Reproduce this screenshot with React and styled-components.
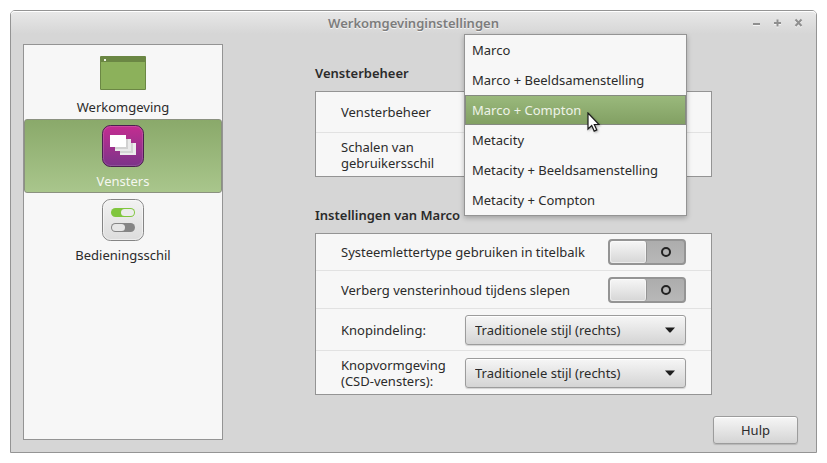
import React, { useState } from "react";
import styled, { createGlobalStyle, css } from "styled-components";

const managers = [
  "Marco",
  "Marco + Beeldsamenstelling",
  "Marco + Compton",
  "Metacity",
  "Metacity + Beeldsamenstelling",
  "Metacity + Compton",
];

const buttonStyles = ["Traditionele stijl (rechts)", "Klassieke stijl (links)"];

export default function App() {
  const [page, setPage] = useState("Vensters");
  const [manager, setManager] = useState("Marco + Compton");

  return (
    <>
      <GlobalStyle />
      <Window>
        <TitleBar>
          <Title>Werkomgevinginstellingen</Title>
          <WindowButtons>
            <WindowButton aria-label="Minimaliseren">
              <svg width="9" height="9" viewBox="0 0 9 9">
                <path d="M1 6h7" />
              </svg>
            </WindowButton>
            <WindowButton aria-label="Maximaliseren">
              <svg width="9" height="9" viewBox="0 0 9 9">
                <path d="M1 5h7M4.5 1.5v7" />
              </svg>
            </WindowButton>
            <WindowButton aria-label="Sluiten">
              <svg width="9" height="9" viewBox="0 0 9 9">
                <path d="M1.5 1.5l6 6.5M7.5 1.5l-6 6.5" />
              </svg>
            </WindowButton>
          </WindowButtons>
        </TitleBar>
        <Body>
          <Sidebar>
            <SidebarItem
              label="Werkomgeving"
              icon={<DesktopIcon />}
              page={page}
              onSelect={setPage}
            />
            <SidebarItem
              label="Vensters"
              icon={<WindowsIcon />}
              page={page}
              onSelect={setPage}
            />
            <SidebarItem
              label="Bedieningsschil"
              icon={<InterfaceIcon />}
              page={page}
              onSelect={setPage}
            />
          </Sidebar>
          <Main>
            <Sections>
              <Section>
                <Heading>Vensterbeheer</Heading>
                <Card>
                  <Row>
                    <Label htmlFor="manager">Vensterbeheer</Label>
                    <MenuAnchor>
                      <Dropdown
                        id="manager"
                        options={managers}
                        value={manager}
                        onChange={(e) => setManager(e.target.value)}
                      />
                      <Menu role="listbox" aria-label="Vensterbeheer">
                        {managers.map((name) => (
                          <Option
                            key={name}
                            role="option"
                            aria-selected={name === manager}
                            $active={name === manager}
                            onClick={() => setManager(name)}
                          >
                            {name}
                          </Option>
                        ))}
                        <Pointer />
                      </Menu>
                    </MenuAnchor>
                  </Row>
                  <Row>
                    <Label htmlFor="scaling">Schalen van gebruikersschil</Label>
                    <Dropdown id="scaling" options={["Automatisch"]} />
                  </Row>
                </Card>
              </Section>
              <Section>
                <Heading>Instellingen van Marco</Heading>
                <Card>
                  <Row>
                    <Label htmlFor="font">
                      Systeemlettertype gebruiken in titelbalk
                    </Label>
                    <Switch id="font" type="checkbox" />
                  </Row>
                  <Row>
                    <Label htmlFor="drag">
                      Verberg vensterinhoud tijdens slepen
                    </Label>
                    <Switch id="drag" type="checkbox" />
                  </Row>
                  <Row>
                    <Label htmlFor="layout">Knopindeling:</Label>
                    <Dropdown id="layout" options={buttonStyles} />
                  </Row>
                  <Row>
                    <Label htmlFor="csd">Knopvormgeving (CSD-vensters):</Label>
                    <Dropdown id="csd" options={buttonStyles} />
                  </Row>
                </Card>
              </Section>
            </Sections>
            <Footer>
              <HelpButton>Hulp</HelpButton>
            </Footer>
          </Main>
        </Body>
      </Window>
    </>
  );
}

function SidebarItem({ label, icon, page, onSelect }) {
  return (
    <Item $active={page === label} onClick={() => onSelect(label)}>
      <IconBox>{icon}</IconBox>
      {label}
    </Item>
  );
}

function Dropdown({ options, ...props }) {
  return (
    <SelectBox>
      <Select {...props}>
        {options.map((option) => (
          <option key={option}>{option}</option>
        ))}
      </Select>
      <Arrow width="10" height="6" viewBox="0 0 10 6">
        <path d="M0 0.5h10L6 5Q5 6 4 5z" fill="#1e1e1e" />
      </Arrow>
    </SelectBox>
  );
}

function DesktopIcon() {
  return (
    <svg width="46" height="36" viewBox="0 -2 46 36">
      <rect width="46" height="34" rx="1" fill="#6b8744" />
      <rect x="1" y="6" width="44" height="27" fill="#8cb15b" />
      <rect x="4" y="3" width="2" height="2" fill="#eef3e6" />
    </svg>
  );
}

function WindowsIcon() {
  return (
    <svg width="42" height="42" viewBox="0 0 42 42">
      <defs>
        <linearGradient id="purple" x1="0" y1="0" x2="0" y2="1">
          <stop offset="0" stopColor="#c42d91" />
          <stop offset="1" stopColor="#7b3489" />
        </linearGradient>
      </defs>
      <rect x="0.5" y="0.5" width="41" height="41" rx="8" fill="url(#purple)" stroke="#4b1f4f" />
      <rect x="1.5" y="1.5" width="39" height="39" rx="7" fill="none" stroke="#fff" strokeOpacity="0.14" />
      <rect x="18" y="18" width="16" height="12" fill="#ececec" />
      <path d="M18 18h13v10H18z" fill="#000" fillOpacity="0.1" />
      <rect x="13" y="14" width="16" height="12" fill="#e9e9e9" />
      <path d="M13 14h13v10H13z" fill="#000" fillOpacity="0.1" />
      <rect x="8" y="10" width="16" height="12" fill="#fff" />
    </svg>
  );
}

function InterfaceIcon() {
  return (
    <svg width="42" height="42" viewBox="0 0 42 42">
      <defs>
        <linearGradient id="plate" x1="0" y1="0" x2="0" y2="1">
          <stop offset="0" stopColor="#f2f2f2" />
          <stop offset="1" stopColor="#dcdcdc" />
        </linearGradient>
      </defs>
      <rect x="0.5" y="0.5" width="41" height="41" rx="8" fill="url(#plate)" stroke="#858585" />
      <rect x="1.5" y="1.5" width="39" height="39" rx="7" fill="none" stroke="#fff" strokeOpacity="0.5" />
      <rect x="9" y="9" width="24" height="9" rx="4.5" fill="#80c63e" />
      <rect x="19" y="10" width="13" height="7" rx="3.5" fill="#ececec" />
      <rect x="9" y="24" width="24" height="9" rx="4.5" fill="#858585" />
      <rect x="10" y="25" width="13" height="7" rx="3.5" fill="#e6e6e6" />
    </svg>
  );
}

function Pointer() {
  return (
    <PointerIcon width="13" height="21" viewBox="0 0 13 21">
      <path
        d="M1 1v16l3.7-3.5 2.5 5.6 2.6-1.2-2.5-5.4H12z"
        fill="#fff"
        stroke="#1a1a1a"
        strokeWidth="1.2"
      />
    </PointerIcon>
  );
}

const GlobalStyle = createGlobalStyle`
  *,
  *::before,
  *::after {
    box-sizing: border-box;
  }
  body {
    margin: 0;
    background: #fff;
    color: #2b2b2b;
    font-family: "Noto Sans", sans-serif;
    font-size: 13px;
    line-height: 16px;
  }
  button,
  select {
    font: inherit;
    color: inherit;
  }
`;

const raised = css`
  border: 1px solid #9c9c9c;
  border-radius: 3px;
  background: linear-gradient(#f6f6f6, #d4d4d4);
  box-shadow: inset 0 1px 0 #fff, 0 1px 1px rgba(0, 0, 0, 0.15);
`;

const Window = styled.div`
  display: flex;
  flex-direction: column;
  min-height: calc(100vh - 20px);
  margin: 10px;
  border: 1px solid #949494;
  border-radius: 5px 5px 0 0;
  background: #d6d6d6;
`;

const TitleBar = styled.header`
  display: grid;
  grid-template-columns: 1fr auto 1fr;
  align-items: center;
  height: 23px;
  padding: 0 11px;
  border-radius: 4px 4px 0 0;
  background: linear-gradient(#e8e8e8, #d6d6d6);
  box-shadow: inset 0 1px 0 #fff;
`;

const Title = styled.h1`
  grid-column: 2;
  margin: 0;
  font-size: 13px;
  font-weight: 600;
  color: #7c7c7c;
  text-shadow: 0 1px 0 #f4f4f4;
`;

const WindowButtons = styled.div`
  display: flex;
  justify-content: flex-end;
  gap: 8px;
`;

const WindowButton = styled.button`
  display: grid;
  place-items: center;
  width: 13px;
  height: 16px;
  padding: 0;
  border: 0;
  background: none;

  svg {
    stroke: #8f8f8f;
    stroke-width: 2;
    filter: drop-shadow(0 1px 0 #f4f4f4);
  }
`;

const Body = styled.div`
  display: flex;
  flex: 1;
  padding: 10px 12px 8px;
`;

const Sidebar = styled.nav`
  width: 200px;
  margin-bottom: 4px;
  border: 1px solid #949494;
  background: #f7f7f7;
`;

const Item = styled.button`
  display: flex;
  flex-direction: column;
  align-items: center;
  gap: 3px;
  width: 100%;
  height: 74px;
  padding: 2px 0 3px;
  border: 1px solid transparent;
  border-radius: 3px;
  background: none;
  ${(props) =>
    props.$active &&
    css`
      border-color: #8b9180;
      background: linear-gradient(#8aa96a, #a9c68c);
      color: #f4f7f0;
    `}
`;

const IconBox = styled.span`
  display: grid;
  place-items: center;
  width: 48px;
  height: 48px;
`;

const Main = styled.main`
  display: flex;
  flex: 1;
  flex-direction: column;
`;

const Sections = styled.div`
  display: flex;
  flex: 1;
  flex-direction: column;
  gap: 30px;
  width: 100%;
  max-width: 397px;
  margin: 0 auto;
  padding-top: 21px;
`;

const Section = styled.section``;

const Heading = styled.h2`
  margin: 0 0 10px;
  font-size: 13px;
  font-weight: 600;
`;

const Card = styled.div`
  border: 1px solid #949494;
  background: #f7f7f7;
`;

const Row = styled.div`
  display: flex;
  align-items: center;
  gap: 12px;
  padding: 5px 25px;

  & + & {
    padding-top: 6px;
    border-top: 1px solid #e2e2e2;
  }
`;

const Label = styled.label`
  flex: 1;
`;

const MenuAnchor = styled.div`
  position: relative;
`;

const SelectBox = styled.div`
  display: grid;
  align-items: center;
  width: 221px;

  > * {
    grid-area: 1 / 1;
  }
`;

const Select = styled.select`
  ${raised}
  appearance: none;
  height: 30px;
  padding: 0 24px 0 9px;
`;

const Arrow = styled.svg`
  justify-self: end;
  margin-right: 11px;
  pointer-events: none;
`;

const Menu = styled.ul`
  position: absolute;
  z-index: 1;
  top: -63px;
  left: -1px;
  right: -1px;
  margin: 0;
  padding: 0;
  border: 1px solid #949494;
  background: #f7f7f7;
  box-shadow: 0 2px 5px rgba(0, 0, 0, 0.25);
  list-style: none;
`;

const Option = styled.li`
  display: flex;
  align-items: center;
  height: 30px;
  padding: 0 6px;
  border: 1px solid transparent;
  ${(props) =>
    props.$active &&
    css`
      border-color: #858a80;
      background: linear-gradient(#9ab97c, #82a063);
      color: #eef3e8;
    `}
`;

const PointerIcon = styled.svg`
  position: absolute;
  top: 77px;
  left: 122px;
  filter: drop-shadow(1px 1px 1px rgba(0, 0, 0, 0.3));
  pointer-events: none;
`;

const Switch = styled.input`
  appearance: none;
  display: flex;
  align-items: center;
  width: 78px;
  height: 26px;
  margin: 0;
  border: 2px solid #949494;
  border-radius: 4px;
  background: linear-gradient(#adadad, #b8b8b8);

  &::before {
    content: "";
    width: 37px;
    height: 22px;
    border-right: 1px solid #949494;
    border-radius: 3px;
    background: linear-gradient(#f6f6f6, #d6d6d6);
    box-shadow: inset 0 0 0 1px rgba(255, 255, 255, 0.5);
  }

  &::after {
    content: "";
    width: 10px;
    height: 10px;
    margin: 0 auto;
    border: 2px solid #222;
    border-radius: 50%;
  }

  &:checked {
    flex-direction: row-reverse;
    background: #8fae70;
  }
`;

const Footer = styled.footer`
  display: flex;
  justify-content: flex-end;
  padding-right: 6px;
`;

const HelpButton = styled.button`
  ${raised}
  width: 85px;
  height: 28px;
  padding: 0;
`;
